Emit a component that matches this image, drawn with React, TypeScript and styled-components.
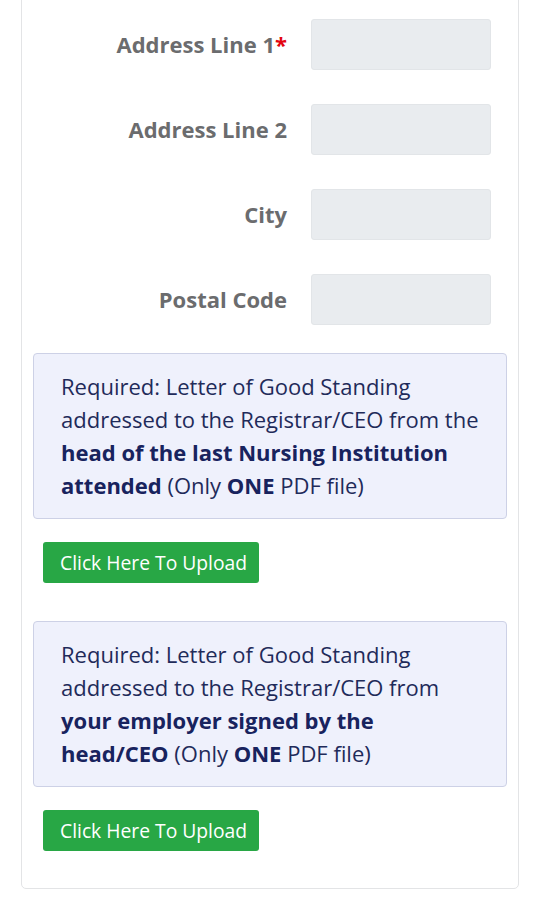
import React from 'react'
import styled, { createGlobalStyle } from 'styled-components'

const GlobalStyle = createGlobalStyle`
  * {
    box-sizing: border-box;
  }

  html,
  body {
    margin: 0;
    padding: 0;
    background: #ffffff;
    font-family: "Open Sans", "Noto Sans", "Liberation Sans", sans-serif;
  }
`;

const fields = [
  { label: 'Address Line 1', required: true },
  { label: 'Address Line 2' },
  { label: 'City' },
  { label: 'Postal Code' },
];

export default function App() {
  return (
    <>
      <GlobalStyle />
      <Page>
        <Card>
          <Fields>
            {fields.map((field) => (
              <FieldRow key={field.label}>
                <Label>
                  {field.label}
                  {field.required && <Star>*</Star>}
                </Label>
                <Input type="text" />
              </FieldRow>
            ))}
          </Fields>

          <UploadBlock>
            <Notice>
              Required: Letter of Good Standing addressed to the Registrar/CEO from the{' '}
              <strong>head of the last Nursing Institution attended</strong> (Only <strong>ONE</strong> PDF file)
            </Notice>
            <UploadButton type="button">Click Here To Upload</UploadButton>
          </UploadBlock>

          <UploadBlock>
            <Notice>
              Required: Letter of Good Standing addressed to the Registrar/CEO from{' '}
              <strong>your employer signed by the head/CEO</strong> (Only <strong>ONE</strong> PDF file)
            </Notice>
            <UploadButton type="button">Click Here To Upload</UploadButton>
          </UploadBlock>
        </Card>
      </Page>
    </>
  );
}

const Page = styled.div`
  padding: 0 21px 20px;
`;

const Card = styled.section`
  margin-top: -20px;
  padding: 38px 11px 37px;
  background: #ffffff;
  border: 1px solid #e3e4e6;
  border-radius: 5px;
  display: flex;
  flex-direction: column;
`;

const Fields = styled.div`
  display: flex;
  flex-direction: column;
  gap: 34px;
  padding-right: 16px;
`;

const FieldRow = styled.div`
  display: grid;
  grid-template-columns: 1fr 180px;
  column-gap: 24px;
  align-items: center;
`;

const Label = styled.label`
  text-align: right;
  font-size: 22px;
  font-weight: 700;
  color: #6b6c6e;
  line-height: 1.3;
`;

const Star = styled.span`
  color: #e3060f;
`;

const Input = styled.input`
  height: 51px;
  width: 100%;
  border: 1px solid #e2e5e8;
  border-radius: 3px;
  background: #e9ecef;
  outline: none;
`;

const UploadBlock = styled.div`
  display: flex;
  flex-direction: column;
  align-items: flex-start;
  margin-top: 28px;

  & + & {
    margin-top: 38px;
  }
`;

const Notice = styled.div`
  width: 100%;
  padding: 16px 20px 16px 27px;
  background: #eff1fc;
  border: 1px solid #cdd1e6;
  border-radius: 4px;
  font-size: 22px;
  line-height: 33px;
  color: #1f2b5a;

  strong {
    font-weight: 700;
    color: #18235e;
  }
`;

const UploadButton = styled.button`
  margin: 23px 0 0 10px;
  height: 41px;
  padding: 0 12px 0 17px;
  border: none;
  border-radius: 3px;
  background: #28a745;
  color: #ffffff;
  font-family: inherit;
  font-size: 19.3px;
  cursor: pointer;
`;
